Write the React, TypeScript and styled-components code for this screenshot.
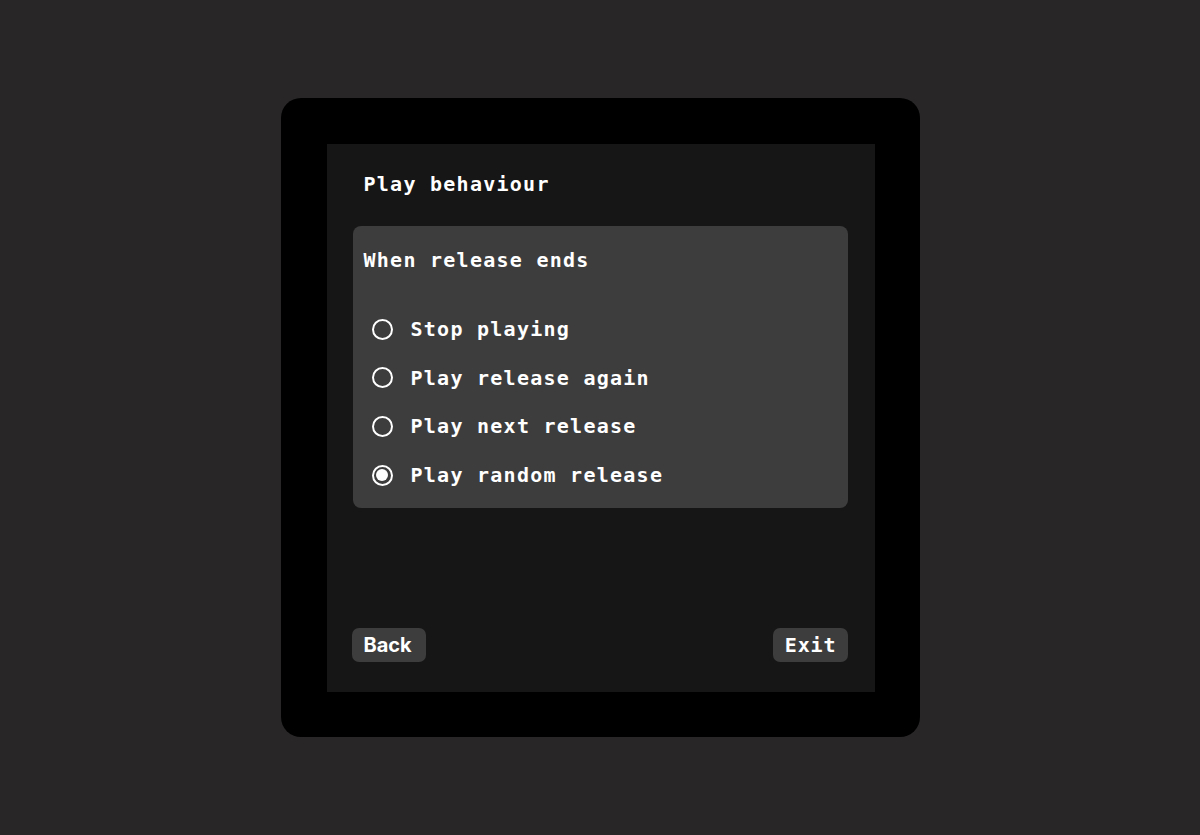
import React from "react";
import styled, { createGlobalStyle } from "styled-components";

const Global = createGlobalStyle`
  html, body { margin: 0; padding: 0; background: #282627; }
  body { height: 100vh; }
  #root { height: 100%; }
  * { box-sizing: border-box; }
`;

const Page = styled.div`
  height: 100vh;
  display: flex;
  align-items: center;
  justify-content: center;
  background: #282627;
`;

const Device = styled.div`
  width: 639px;
  height: 639px;
  padding: 46px 45px 45px 46px;
  background: #000;
  border-radius: 20px;
  display: flex;
`;

const Screen = styled.div`
  flex: 1;
  background: #161616;
  display: flex;
  flex-direction: column;
  padding: 24px 27px 30px 25px;
  color: #fff;
  font-family: "DejaVu Sans Mono", "Liberation Mono", monospace;
  font-weight: bold;
  font-size: 20px;
  letter-spacing: 1.26px;
`;

const Title = styled.div`
  padding-left: 12px;
  line-height: 32px;
  height: 32px;
  margin-bottom: 26px;
`;

const Panel = styled.div`
  background: #3d3d3d;
  border-radius: 8px;
  padding: 16px 12px 13px 11px;
  margin-left: 1px;
  display: flex;
  flex-direction: column;
`;

const PanelHeading = styled.div`
  line-height: 36px;
  height: 36px;
  margin-bottom: 31px;
`;

const Options = styled.div`
  display: flex;
  flex-direction: column;
  gap: 8.7px;
`;

const Option = styled.label`
  display: flex;
  align-items: center;
  height: 40px;
  gap: 18px;
  padding-left: 8px;
  cursor: pointer;
`;

const Radio = styled.span<{ $checked?: boolean }>`
  width: 21px;
  height: 21px;
  border-radius: 50%;
  border: 2px solid #fff;
  display: flex;
  align-items: center;
  justify-content: center;
  flex: none;
  &::after {
    content: "";
    width: 12px;
    height: 12px;
    border-radius: 50%;
    background: #fff;
    display: ${(p) => (p.$checked ? "block" : "none")};
  }
`;

const Spacer = styled.div`
  flex: 1;
`;

const Footer = styled.div`
  display: flex;
  justify-content: space-between;
  align-items: center;
`;

const Button = styled.button<{ $sans?: boolean }>`
  height: 34px;
  padding: ${(p) => (p.$sans ? "0 14px 0 12px" : "0 11px 0 12px")};
  border: none;
  border-radius: 7px;
  background: #3d3d3d;
  color: #fff;
  font-family: ${(p) =>
    p.$sans ? `"Inter", "Noto Sans", sans-serif` : `"DejaVu Sans Mono", "Liberation Mono", monospace`};
  font-weight: bold;
  font-size: 20px;
  letter-spacing: ${(p) => (p.$sans ? "0" : "0.9px")};
  line-height: 34px;
  cursor: pointer;
`;

const options = [
  "Stop playing",
  "Play release again",
  "Play next release",
  "Play random release",
];

export default function App() {
  const selected = 3;
  return (
    <Page>
      <Global />
      <Device>
        <Screen>
          <Title>Play behaviour</Title>
          <Panel>
            <PanelHeading>When release ends</PanelHeading>
            <Options>
              {options.map((o, i) => (
                <Option key={o}>
                  <Radio $checked={i === selected} />
                  <span>{o}</span>
                </Option>
              ))}
            </Options>
          </Panel>
          <Spacer />
          <Footer>
            <Button $sans>Back</Button>
            <Button>Exit</Button>
          </Footer>
        </Screen>
      </Device>
    </Page>
  );
}
